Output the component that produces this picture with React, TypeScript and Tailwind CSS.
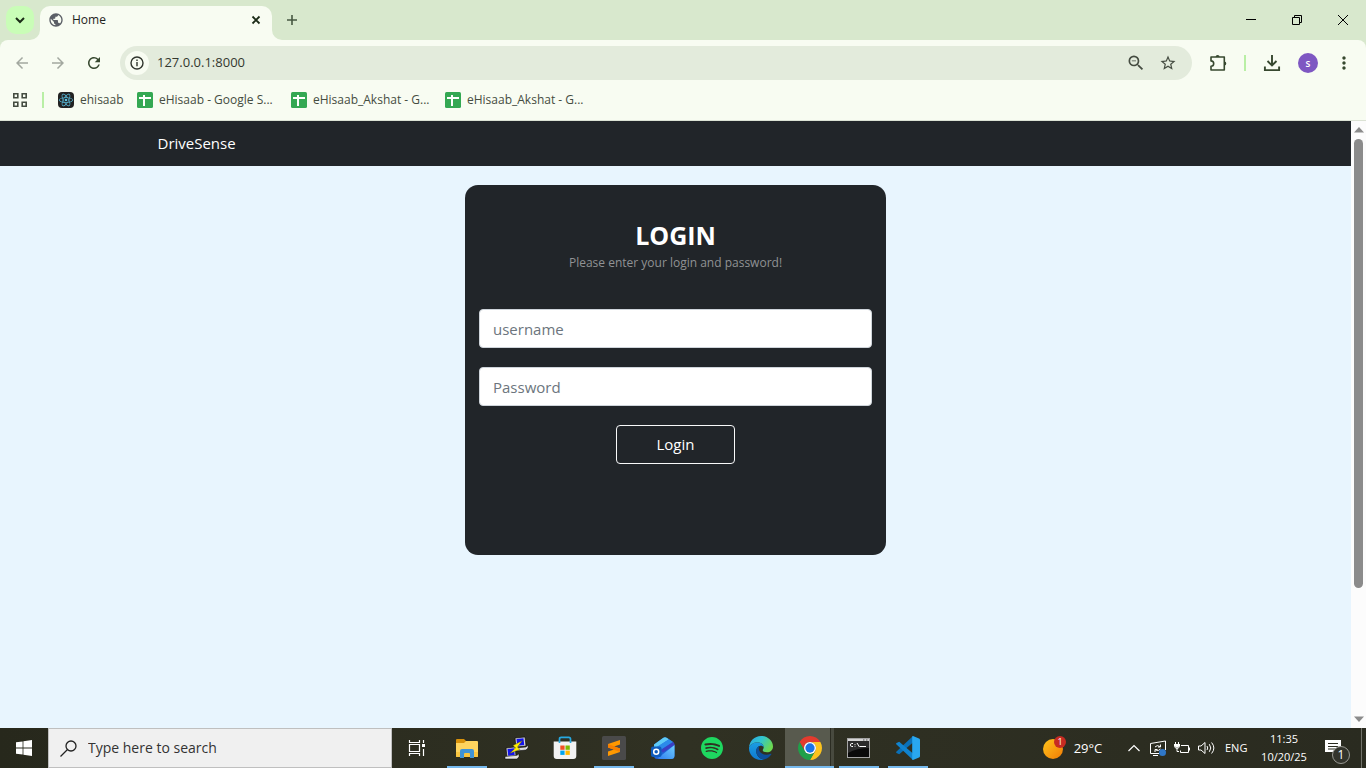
import type { ReactNode } from "react";
import {
  MdArrowBack,
  MdArrowForward,
  MdMoreVert,
  MdPublic,
  MdRefresh,
  MdStarBorder,
  MdZoomOut,
} from "react-icons/md";
import { SiReact, SiSpotify } from "react-icons/si";

const bookmarks = [
  { label: "ehisaab", icon: "react", width: "w-[79px]" },
  { label: "eHisaab - Google S...", icon: "sheet", width: "w-[154px]" },
  { label: "eHisaab_Akshat - G...", icon: "sheet", width: "w-[154px]" },
  { label: "eHisaab_Akshat - G...", icon: "sheet", width: "w-[154px]" },
];

function TabStrip() {
  return (
    <div className="flex h-10 items-end bg-[#d8e8cd]">
      <button aria-label="Search tabs" className="mb-1.5 ml-1.5 flex size-7 items-center justify-center rounded-[10px] bg-[#c9fdb7]">
        <svg viewBox="0 0 10 10" className="size-2.5" fill="none" stroke="#1b2b17" strokeWidth="2">
          <path d="M1 3l4 4 4-4" />
        </svg>
      </button>
      <div className="relative ml-1.5 flex h-[34px] w-[232px] items-center rounded-t-[10px] bg-[#f8fcf2] px-2 pb-1.5">
        <svg viewBox="0 0 10 10" className="absolute -left-2.5 bottom-0 size-2.5" fill="#f8fcf2">
          <path d="M10 0v10H0A10 10 0 0 0 10 0z" />
        </svg>
        <svg viewBox="0 0 10 10" className="absolute -right-2.5 bottom-0 size-2.5" fill="#f8fcf2">
          <path d="M0 0v10h10A10 10 0 0 1 0 0z" />
        </svg>
        <MdPublic className="size-4 text-[#5b5f66]" />
        <span className="ml-2 flex-1 text-xs text-[#1f241d]">Home</span>
        <button aria-label="Close tab" className="flex size-4 items-center justify-center">
          <svg viewBox="0 0 10 10" className="size-2.5" stroke="#1b2b17" strokeWidth="1.8">
            <path d="M1.5 1.5l7 7M8.5 1.5l-7 7" />
          </svg>
        </button>
      </div>
      <button aria-label="New tab" className="mb-1.5 ml-1.5 flex size-7 items-center justify-center">
        <svg viewBox="0 0 12 12" className="size-3" stroke="#465741" strokeWidth="1.6">
          <path d="M6 1v10M1 6h10" />
        </svg>
      </button>
      <div className="ml-auto flex h-10">
        <button aria-label="Minimize" className="flex w-[46px] items-center justify-center">
          <svg viewBox="0 0 10 10" className="size-2.5" stroke="#000">
            <path d="M0 4.5h10" />
          </svg>
        </button>
        <button aria-label="Restore" className="flex w-[46px] items-center justify-center">
          <svg viewBox="0 0 10 10" className="size-2.5" fill="none" stroke="#000">
            <path d="M.5 2.5h7v7h-7zM2.5 2.5v-2h7v7h-2" />
          </svg>
        </button>
        <button aria-label="Close" className="flex w-[46px] items-center justify-center">
          <svg viewBox="0 0 10 10" className="size-2.5" stroke="#000">
            <path d="M0 0l10 10M10 0L0 10" />
          </svg>
        </button>
      </div>
    </div>
  );
}

function Toolbar() {
  return (
    <div className="bg-[#d8e8cd]">
      <div className="flex h-[46px] items-center rounded-t-lg bg-[#f8fcf2] pr-3 pl-2 text-[#37482f]">
        <button aria-label="Back" className="flex size-7 items-center justify-center text-[#a3a8a0]">
          <MdArrowBack className="size-[18px]" />
        </button>
        <button aria-label="Forward" className="ml-2 flex size-7 items-center justify-center text-[#a3a8a0]">
          <MdArrowForward className="size-[18px]" />
        </button>
        <button aria-label="Reload" className="ml-2 flex size-7 items-center justify-center">
          <MdRefresh className="size-[18px]" />
        </button>
        <div className="ml-3 flex h-[34px] flex-1 items-center rounded-full bg-[#e3ebdc] pr-3 pl-[5px]">
          <button aria-label="Site information" className="flex size-6 items-center justify-center rounded-full bg-[#f8fcf2]">
            <svg viewBox="0 0 14 14" className="size-3.5" fill="none" stroke="#30352d" strokeWidth="1.4">
              <circle cx="7" cy="7" r="6" />
              <path d="M7 6v4.2M7 3.5v1.5" />
            </svg>
          </button>
          <input
            aria-label="Address"
            defaultValue="127.0.0.1:8000"
            className="ml-2 min-w-0 flex-1 bg-transparent text-[13px] text-[#33382f] outline-none"
          />
          <button aria-label="Zoom" className="flex size-6 items-center justify-center text-[#454c41]">
            <MdZoomOut className="size-5" />
          </button>
          <button aria-label="Bookmark this tab" className="ml-2 flex size-6 items-center justify-center text-[#454c41]">
            <MdStarBorder className="size-[18px]" />
          </button>
        </div>
        <button aria-label="Extensions" className="ml-3 flex size-7 items-center justify-center">
          <svg viewBox="0 0 18 18" className="size-[18px]">
            <path d="M2 3h13.3v13H2v-3.7a2.6 2.6 0 0 0 0-5.4z" fill="none" stroke="#37482f" strokeWidth="1.6" strokeLinejoin="round" />
            <path d="M6.600 3a2 2 0 0 1 4 0zM15.300 7.400a2 2 0 0 1 0 4z" fill="#37482f" />
          </svg>
        </button>
        <span className="mx-3 h-4 w-0.5 bg-[#b9efa5]" />
        <button aria-label="Downloads" className="flex size-7 items-center justify-center">
          <svg viewBox="0 0 18 18" className="size-[18px]" fill="none" stroke="#37482f" strokeWidth="1.9">
            <path d="M9 1v10M4.500 7L9 11.500 13.500 7M1.900 12.500v3.600h14.200v-3.600" />
          </svg>
        </button>
        <button aria-label="Profile" className="ml-3 flex size-5 items-center justify-center rounded-full bg-[#7e57c2] text-[10px] font-semibold text-white">
          s
        </button>
        <button aria-label="Menu" className="ml-4 flex size-5 items-center justify-center">
          <MdMoreVert className="size-5" />
        </button>
      </div>
    </div>
  );
}

function SheetIcon() {
  return (
    <svg viewBox="0 0 16 16" className="size-4 shrink-0">
      <rect width="16" height="16" rx="1.5" fill="#34a853" />
      <path d="M2 6h12M7 3v11" stroke="#fff" strokeWidth="2" />
    </svg>
  );
}

function BookmarksBar() {
  return (
    <nav className="flex h-[35px] items-center border-b border-[#dbe2d4] bg-[#f8fcf2] pb-1.5 pl-3">
      <button aria-label="Apps">
        <svg viewBox="0 0 14 14" className="ml-px size-3.5" fill="none" stroke="#454c41" strokeWidth="1.6">
          <path d="M.8.8h4v4h-4zM9.2.8h4v4h-4zM.8 9.2h4v4h-4zM9.2 9.2h4v4h-4z" />
        </svg>
      </button>
      <span className="mr-3.5 ml-[15px] h-4 w-0.5 bg-[#b9efa5]" />
      {bookmarks.map((b, i) => (
        <a key={i} href="#" className={`flex items-center gap-1.5 text-xs text-[#454c41] ${b.width}`}>
          {b.icon === "react" ? (
            <span className="flex size-4 shrink-0 items-center justify-center rounded-sm bg-[#222]">
              <SiReact className="size-3.5 text-[#5cc5e6]" />
            </span>
          ) : (
            <SheetIcon />
          )}
          <span className="whitespace-nowrap">{b.label}</span>
        </a>
      ))}
    </nav>
  );
}

function LoginCard() {
  return (
    <form
      className="flex h-[370px] w-5/12 max-w-[421px] flex-col items-center rounded-[13px] bg-[#212529] px-3.5 pt-[34px] text-white"
      onSubmit={(e) => e.preventDefault()}
    >
      <h2 className="text-[25px] leading-8 font-bold">LOGIN</h2>
      <p className="text-xs leading-6 text-[#909294]">Please enter your login and password!</p>
      <input
        aria-label="username"
        placeholder="username"
        className="mt-[34px] h-[39px] w-full rounded border border-[#ced4da] bg-white px-[13px] text-[15px] text-[#212529] placeholder:text-[#6c757d]"
      />
      <input
        type="password"
        aria-label="Password"
        placeholder="Password"
        className="mt-[19px] h-[39px] w-full rounded border border-[#ced4da] bg-white px-[13px] text-[15px] text-[#212529] placeholder:text-[#6c757d]"
      />
      <button type="submit" className="mt-[19px] h-[39px] w-[119px] rounded border border-[#f8f9fa] text-[15px]">
        Login
      </button>
    </form>
  );
}

function Scrollbar() {
  return (
    <div className="flex w-[15px] flex-col items-center bg-[#fcfcfc] py-1.5">
      <svg viewBox="0 0 10 6" className="h-1.5 w-2.5" fill="#8b8b8b">
        <path d="M5 0l5 5.500H0z" />
      </svg>
      <div className="mt-1.5 w-[9px] grow-[449] rounded-full bg-[#8b8b8b]" />
      <div className="grow-[128]" />
      <svg viewBox="0 0 10 6" className="h-1.5 w-2.5" fill="#8b8b8b">
        <path d="M0 .5h10L5 6z" />
      </svg>
    </div>
  );
}

function ExplorerIcon() {
  return (
    <svg viewBox="0 0 24 24" className="size-6">
      <path d="M1 4q0-1 1-1h7l2 2v5H1z" fill="#d9920b" />
      <path d="M1 7h8l2-2h11q1 0 1 1v14q0 1-1 1H2q-1 0-1-1z" fill="#ffd45e" />
      <path d="M1 16h22v4q0 1-1 1H2q-1 0-1-1z" fill="#f9c540" />
      <path d="M5 22v-7q0-2 2-2h10q2 0 2 2v7h-4v-4q0-1-1-1h-4q-1 0-1 1v4z" fill="#3f93d6" />
    </svg>
  );
}

function PuttyIcon() {
  return (
    <svg viewBox="0 0 24 24" className="size-6">
      <path d="M11 2l10-1 1 9-10 1z" fill="#d4d4d4" stroke="#000" strokeWidth=".6" />
      <path d="M12.500 3l7-.8.7 6.800-7 .8z" fill="#1212f0" />
      <path d="M11 12l11-1 2-2v3l-2 2-10 1z" fill="#dedede" stroke="#000" strokeWidth=".5" />
      <path d="M2 12l9-1 1 9-9 1z" fill="#d4d4d4" stroke="#000" strokeWidth=".6" />
      <path d="M3.500 13l6.500-.7.7 6.700-6.500.7z" fill="#1212f0" />
      <path d="M1 20.500l12-1.200 2-1.500v3L13 23H1z" fill="#e4e4e4" stroke="#000" strokeWidth=".5" />
      <path d="M18.500 4.500L9 9.500l2.500 2.500-6 5.500L16 13.500 13.500 11z" fill="#ffee00" stroke="#333" strokeWidth=".4" />
    </svg>
  );
}

function StoreIcon() {
  return (
    <svg viewBox="0 0 24 24" className="size-6">
      <path d="M.7 5.500h22.600V20q0 3-3 3H3.700q-3 0-3-3z" fill="#f2f2f2" />
      <path d="M6.500 7V3q0-1.700 1.700-1.700h7.600q1.700 0 1.700 1.700v4" fill="none" stroke="#27a9e1" strokeWidth="1.7" />
      <path d="M7.300 9.500h4.300v4.300H7.300z" fill="#f25022" />
      <path d="M12.500 9.500h4.300v4.300h-4.300z" fill="#7fba00" />
      <path d="M7.300 14.600h4.300v4.300H7.300z" fill="#00a4ef" />
      <path d="M12.500 14.600h4.300v4.300h-4.300z" fill="#ffb900" />
    </svg>
  );
}

function SublimeIcon() {
  return (
    <svg viewBox="0 0 24 24" className="size-6">
      <rect width="24" height="24" rx="1.5" fill="#4a4a4a" />
      <path d="M6 8l12-4v4.500l-6 2.100 6 1.900V16L6 20v-4.500l6-2.100-6-1.800z" fill="#ff9800" />
      <path d="M6 8l12 4.500V16L6 11.600z" fill="#f77f00" />
    </svg>
  );
}

function OutlookIcon() {
  return (
    <svg viewBox="0 0 24 24" className="size-6">
      <defs>
        <linearGradient id="mail-front" x1="0" y1="1" x2="1" y2="0">
          <stop offset="0" stopColor="#2f7df0" />
          <stop offset="1" stopColor="#6fd0ff" />
        </linearGradient>
      </defs>
      <path d="M3 8.500L12 2q2-1.500 4 0l6 4q1.500 1 1.500 3v10.500q0 3.500-3.500 3.500H6.500Q3 23 3 19.500z" fill="#1f63d6" />
      <path d="M3 8.500L12 2q2-1.500 4 0l2 1.300L5 12H3z" fill="#5fcbf7" />
      <path d="M18 3.300L22 6 9 14.500 4 12z" fill="#2b8bea" />
      <path d="M22 6q1.500 1 1.500 3L12 16.500l-3-2z" fill="#3b3fc4" />
      <path d="M23.500 9v10.500q0 3.500-3.500 3.500H9q-2 0-2-1z" fill="url(#mail-front)" />
      <rect y="10.500" width="10.500" height="10.500" rx="2" fill="#0f5cbd" />
      <circle cx="5.200" cy="15.700" r="2.500" fill="none" stroke="#fff" strokeWidth="1.500" />
    </svg>
  );
}

function EdgeIcon() {
  return (
    <svg viewBox="0 0 24 24" className="size-6">
      <defs>
        <linearGradient id="edge-top" x1="0" y1="0" x2="1" y2=".5">
          <stop offset="0" stopColor="#2aa5e8" />
          <stop offset=".5" stopColor="#31c5cf" />
          <stop offset="1" stopColor="#6bd851" />
        </linearGradient>
        <linearGradient id="edge-side" x1="0" y1="0" x2="0" y2="1">
          <stop offset="0" stopColor="#1b9de2" />
          <stop offset="1" stopColor="#0f78d0" />
        </linearGradient>
      </defs>
      <path d="M0 11.500C.5 5 5.500 0 12 0c7 0 12 5 12 10.500 0 3.500-2.700 5.800-6 5.800-2.700 0-4.300-1-4.300-2 0-.8 1-1.300 1-3C14.700 8.500 12 6.500 8.500 6.500 4.500 6.500 1 8.500 0 11.500z" fill="url(#edge-top)" />
      <path d="M0 11.500C1 8.500 4.500 6.500 8.500 6.500c3.500 0 6.200 2 6.200 4.800-.5-1-2-1.800-3.500-1.500C8.500 10.500 7 13 7.300 16c.4 4 3.500 7 7.700 7.500Q13.500 24 12 24C5 24 0 18.500 0 12.500z" fill="url(#edge-side)" />
      <path d="M9.800 10.300C7.500 11.700 6.900 14 7.300 16c.7 4.200 4 7 7.700 7.500 3-.7 5.500-2.500 7.200-5 .4-.7 0-1-.6-.7-5.500 2.700-11.800-.5-11.800-5.300 0-.9.2-1.600.600-2.300z" fill="#0d4f9c" />
    </svg>
  );
}

function ChromeIcon() {
  return (
    <svg viewBox="2 2 44 44" className="size-6">
      <path d="M4.950 13A22 22 0 0 1 43.050 13H24A11 11 0 0 0 14.470 29.500z" fill="#e33b2e" />
      <path d="M43.050 13A22 22 0 0 1 24 46L33.530 29.500A11 11 0 0 0 24 13z" fill="#fcc31e" />
      <path d="M24 46A22 22 0 0 1 4.950 13L14.470 29.500A11 11 0 0 0 33.530 29.500z" fill="#1fa04a" />
      <circle cx="24" cy="24" r="11" fill="#fff" />
      <circle cx="24" cy="24" r="8.500" fill="#1a73e8" />
    </svg>
  );
}

function TerminalIcon() {
  return (
    <svg viewBox="0 0 23 20" className="h-5 w-[23px]">
      <rect x=".5" y=".5" width="22" height="19" fill="#0a0a0a" stroke="#a5a5a5" />
      <path d="M1 3h21v7Q10 10 1 15z" fill="#2c2c2c" />
      <path d="M1 1h21v2H1z" fill="#d5d5d5" />
      <path d="M16 2h1.500M19 2h1.500" stroke="#555" />
      <path d="M6 5.500H4.500Q3.500 5.500 3.500 7t1 1.500H6M8 6v.8M8 7.800v.8M10 5l2.500 4M13 8.500h6" fill="none" stroke="#fff" />
    </svg>
  );
}

function VsCodeIcon() {
  return (
    <svg viewBox="0 0 24 24" className="size-6">
      <path d="M17 0v6.500L3.200 18.200.5 16.900q-.8-.7 0-1.500z" fill="#0a70b8" />
      <path d="M17 24v-6.500L3.200 5.800.5 7.100q-.8.700 0 1.500z" fill="#1083cf" />
      <path d="M17 0l6 2.500q1 .4 1 1.500v16q0 1.100-1 1.500L17 24q-.8-.2-.8-1V1q0-.8.8-1z" fill="#29a7f0" />
    </svg>
  );
}

const apps: { name: string; icon: ReactNode; open?: boolean; active?: boolean }[] = [
  { name: "File Explorer", icon: <ExplorerIcon />, open: true },
  { name: "PuTTY", icon: <PuttyIcon /> },
  { name: "Microsoft Store", icon: <StoreIcon /> },
  { name: "Sublime Text", icon: <SublimeIcon />, open: true },
  { name: "Outlook", icon: <OutlookIcon /> },
  { name: "Spotify", icon: <SiSpotify className="size-[22px] text-[#1ed760]" /> },
  { name: "Edge", icon: <EdgeIcon /> },
  { name: "Chrome", icon: <ChromeIcon />, active: true },
  { name: "Command Prompt", icon: <TerminalIcon />, open: true },
  { name: "Visual Studio Code", icon: <VsCodeIcon />, open: true },
];

function Tray() {
  return (
    <div className="ml-auto flex items-center text-white">
      <button className="flex items-center gap-2 text-sm">
        <span className="relative size-[22px]">
          <span className="absolute bottom-0 left-0 size-5 rounded-full bg-linear-to-br from-[#ffc51b] to-[#f07a05]" />
          <span className="absolute -top-px -right-px flex size-3 items-center justify-center rounded-full bg-[#c72b22] text-[9px] leading-3">
            1
          </span>
        </span>
        <span className="w-[30px] text-[13px] whitespace-nowrap">29°C</span>
      </button>
      <button aria-label="Show hidden icons" className="ml-[25px]">
        <svg viewBox="0 0 12 8" className="h-2 w-3" fill="none" stroke="#fff" strokeWidth="1.2">
          <path d="M.5 7L6 1.500 11.500 7" />
        </svg>
      </button>
      <button aria-label="Updates" className="ml-2.5">
        <svg viewBox="0 0 16 16" className="size-4" fill="none" stroke="#fff">
          <path d="M9 13.500H.5v-10l15-2.500v9M3 15.500h5" />
          <path d="M5 7q2-2.500 5-.5M10.500 4.500V7H8M10.500 9q-2 2.500-5 1M5 12V9.500h2.500" />
          <circle cx="12.500" cy="12.500" r="3.500" fill="#2f77c8" stroke="none" />
        </svg>
      </button>
      <button aria-label="Battery" className="ml-2">
        <svg viewBox="0 0 16 14" className="h-3.5 w-4" fill="none" stroke="#fff">
          <path d="M7 4.500h7.500v7H6.500v-2M15.500 6.500v3M1.500 1v2.500M4.500 1v2.500M0 3.500h6M.5 3.500V5q.5 2.500 2.500 2.500T5.500 5V3.500M3 7.500v3h2" />
          <path d="M1 4h4v1.500L3 7 1 5.500z" fill="#fff" stroke="none" />
        </svg>
      </button>
      <button aria-label="Volume" className="ml-2">
        <svg viewBox="0 0 17 14" className="h-3.5 w-[17px]" fill="none" stroke="#fff">
          <path d="M.5 5h2.500l4-3.500v11L3 9H.5zM9 5q1.500 2 0 4M11.300 3.200q3 3.800 0 7.600M13.600 1.500q4.500 5.500 0 11" />
        </svg>
      </button>
      <span className="ml-2.5 w-6 text-[11px]">ENG</span>
      <time className="ml-2.5 w-[50px] text-center text-[11px] leading-[18px] whitespace-nowrap">
        11:35
        <br />
        10/20/25
      </time>
      <button aria-label="Notifications" className="relative mr-3 ml-4 size-6">
        <svg viewBox="0 0 24 24" className="size-6">
          <path d="M0 4h16v12h-4v4l-4-4H0z" fill="#fff" />
          <path d="M3 7.500h10M3 10.500h10M3 13h7" stroke="#2b2c21" />
        </svg>
        <span className="absolute -right-px -bottom-1 flex size-[18px] items-center justify-center rounded-full border border-[#9a9a94] bg-[#33342c] text-xs leading-4">
          1
        </span>
      </button>
      <span className="mr-1 h-10 w-px bg-[#71726a]" />
    </div>
  );
}

function Taskbar() {
  return (
    <footer className="flex h-10 bg-linear-to-r from-[#27281c] via-[#303123] to-[#2a2b20]">
      <button aria-label="Start" className="flex w-12 items-center justify-center">
        <svg viewBox="0 0 16 16" className="size-4" fill="#fff">
          <path d="M0 2.300L6.600 1.400v6.200H0zM7.400 1.300L16 0v7.600H7.400zM0 8.400h6.600v6.200L0 13.700zM7.400 8.400H16V16l-8.600-1.300z" />
        </svg>
      </button>
      <label className="flex w-[344px] items-center border border-[#bfbfbf] bg-[#f0f0f0] pl-[11px]">
        <svg viewBox="0 0 17 17" className="size-[17px]" fill="none" stroke="#222" strokeWidth="1.300">
          <circle cx="11" cy="6" r="5" />
          <path d="M7.500 9.500L.5 16.500" />
        </svg>
        <input
          aria-label="Search"
          placeholder="Type here to search"
          className="ml-[11px] min-w-0 flex-1 bg-transparent text-sm outline-none placeholder:text-[#333]"
        />
      </label>
      <button aria-label="Task View" className="flex w-[50px] items-center justify-center">
        <svg viewBox="0 0 18 16" className="h-4 w-[18px]" fill="none" stroke="#fff" strokeWidth="1.200">
          <path d="M1.500 4.500h10v7h-10zM1.500 0v2.500h10V0M1.500 16v-2.500h10V16M15.500 0v3M15.500 9v7" />
          <path d="M14 4h3v3h-3z" fill="#fff" stroke="none" />
        </svg>
      </button>
      {apps.map((app) => (
        <button
          key={app.name}
          aria-label={app.name}
          className={`relative flex w-[49px] items-center justify-center ${app.active ? "bg-[#585a4e]" : ""}`}
        >
          {app.icon}
          {app.active && <span className="absolute inset-y-0 right-0 w-1 border-l border-[#2b2c22] bg-[#484a3f]" />}
          {app.open && <span className="absolute bottom-0 h-0.5 w-10 bg-[#76b9ed]" />}
          {app.active && <span className="absolute inset-x-0 bottom-0 h-0.5 bg-[#76b9ed]" />}
        </button>
      ))}
      <Tray />
    </footer>
  );
}

export default function App() {
  return (
    <div className="flex min-h-screen flex-col font-['Segoe_UI','Open_Sans',sans-serif]">
      <TabStrip />
      <Toolbar />
      <BookmarksBar />
      <div className="flex flex-1">
        <main className="flex-1 bg-[#e8f5fe]">
          <header className="h-[45px] bg-[#212529]">
            <div className="mx-auto flex h-full max-w-[1056px] items-center px-2.5">
              <a href="#" className="text-[15px] text-white">
                DriveSense
              </a>
            </div>
          </header>
          <div className="mx-auto flex max-w-[1056px] justify-center pt-[19px]">
            <LoginCard />
          </div>
        </main>
        <Scrollbar />
      </div>
      <Taskbar />
    </div>
  );
}
